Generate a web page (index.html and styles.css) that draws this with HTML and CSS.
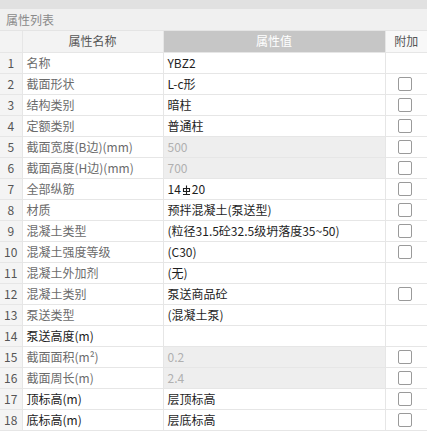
FILE: index.html
```html
<!DOCTYPE html>
<html>
    <head>
        <meta charset="UTF-8">
        <title>属性列表</title>
        <link rel="stylesheet" href="styles.css">
    </head>
    <body>
        <div class="topbar"></div>
        <div class="panel-title">属性列表</div>

        <!-- Таблица свойств -->
        <table class="props">
            <colgroup>
                <col class="col-num">
                <col class="col-name">
                <col class="col-value">
                <col class="col-extra">
            </colgroup>
            <thead>
                <tr>
                    <th class="num"></th>
                    <th class="name-head">属性名称</th>
                    <th class="value-head">属性值</th>
                    <th class="extra-head">附加</th>
                </tr>
            </thead>
            <tbody>
                <tr><td class="num">1</td><td class="name">名称</td><td class="value">YBZ2</td><td class="extra"></td></tr>
                <tr><td class="num">2</td><td class="name">截面形状</td><td class="value">L-c形</td><td class="extra"><span class="check"></span></td></tr>
                <tr><td class="num">3</td><td class="name">结构类别</td><td class="value">暗柱</td><td class="extra"><span class="check"></span></td></tr>
                <tr><td class="num">4</td><td class="name">定额类别</td><td class="value">普通柱</td><td class="extra"><span class="check"></span></td></tr>
                <tr><td class="num">5</td><td class="name">截面宽度(B边)(mm)</td><td class="value disabled">500</td><td class="extra"><span class="check"></span></td></tr>
                <tr><td class="num">6</td><td class="name">截面高度(H边)(mm)</td><td class="value disabled">700</td><td class="extra"><span class="check"></span></td></tr>
                <tr><td class="num">7</td><td class="name">全部纵筋</td><td class="value">14<svg class="rebar" width="9" height="10" viewBox="0 0 9 10"><path d="M4.5 0.5V9.5M1 9.5H8M1.5 3.5H7.5V6.5H1.5Z" fill="none" stroke="#1e1e1e" stroke-width="1.1"/></svg>20</td><td class="extra"><span class="check"></span></td></tr>
                <tr><td class="num">8</td><td class="name">材质</td><td class="value">预拌混凝土(泵送型)</td><td class="extra"><span class="check"></span></td></tr>
                <tr><td class="num">9</td><td class="name">混凝土类型</td><td class="value">(粒径31.5砼32.5级坍落度35~50)</td><td class="extra"><span class="check"></span></td></tr>
                <tr><td class="num">10</td><td class="name">混凝土强度等级</td><td class="value">(C30)</td><td class="extra"><span class="check"></span></td></tr>
                <tr><td class="num">11</td><td class="name">混凝土外加剂</td><td class="value">(无)</td><td class="extra"></td></tr>
                <tr><td class="num">12</td><td class="name">混凝土类别</td><td class="value">泵送商品砼</td><td class="extra"><span class="check"></span></td></tr>
                <tr><td class="num">13</td><td class="name">泵送类型</td><td class="value">(混凝土泵)</td><td class="extra"></td></tr>
                <tr><td class="num">14</td><td class="name strong">泵送高度(m)</td><td class="value"></td><td class="extra"></td></tr>
                <tr><td class="num">15</td><td class="name">截面面积(m²)</td><td class="value disabled">0.2</td><td class="extra"><span class="check"></span></td></tr>
                <tr><td class="num">16</td><td class="name">截面周长(m)</td><td class="value disabled">2.4</td><td class="extra"><span class="check"></span></td></tr>
                <tr><td class="num">17</td><td class="name strong">顶标高(m)</td><td class="value">层顶标高</td><td class="extra"><span class="check"></span></td></tr>
                <tr><td class="num">18</td><td class="name strong">底标高(m)</td><td class="value">层底标高</td><td class="extra"><span class="check"></span></td></tr>
            </tbody>
        </table>
    </body>
</html>
```

FILE: styles.css
```css
body {
    margin: 0;
    font-family: "Noto Sans CJK SC", "Noto Sans", sans-serif;
    font-size: 12px;
    color: #222;
    background: #fff;
}

.topbar {
    height: 9px;
    background: #e1e1e1;
}

.panel-title {
    height: 21px;
    line-height: 21px;
    padding-left: 6px;
    background: #f0f0f0;
    color: #8a8a8a;
    border-bottom: 1px solid #e4e4e4;
}

.props {
    width: 427px;
    border-collapse: collapse;
    table-layout: fixed;
}

.col-num {
    width: 22px;
}

.col-name {
    width: 141px;
}

.col-value {
    width: 222px;
}

.col-extra {
    width: 42px;
}

.props tr {
    height: 21px;
}

.props th,
.props td {
    height: 20px;
    padding: 0;
    border: 1px solid #e6e6e6;
    white-space: nowrap;
    overflow: hidden;
    font-weight: normal;
    line-height: 18px;
}

.props tr > :first-child {
    border-left: none;
}

.props tr > :last-child {
    border-right: none;
}

.props thead tr:first-child th {
    border-top: none;
}

.props thead th {
    background: #f3f3f3;
    color: #555;
    text-align: center;
}

.props thead .value-head {
    background: #c6c6c6;
    color: #fff;
}

.props thead .extra-head {
    background: #f8f8f8;
}

.num {
    background: #f4f4f4;
    color: #555;
    text-align: center;
}

.name {
    padding-left: 4px !important;
    color: #6b6b6b;
}

.name.strong {
    color: #222;
}

.value {
    padding-left: 4px !important;
    color: #1e1e1e;
}

.value.disabled {
    background: #eeeeee;
    color: #b0b0b0;
}

.rebar {
    margin: 0 1px;
    vertical-align: -1px;
}

.extra {
    text-align: center;
}

.check {
    display: block;
    width: 12px;
    height: 12px;
    margin: 0 auto;
    border: 1px solid #9a9a9a;
    border-radius: 2px;
    background: #fff;
    position: relative;
    left: -1px;
}
```
